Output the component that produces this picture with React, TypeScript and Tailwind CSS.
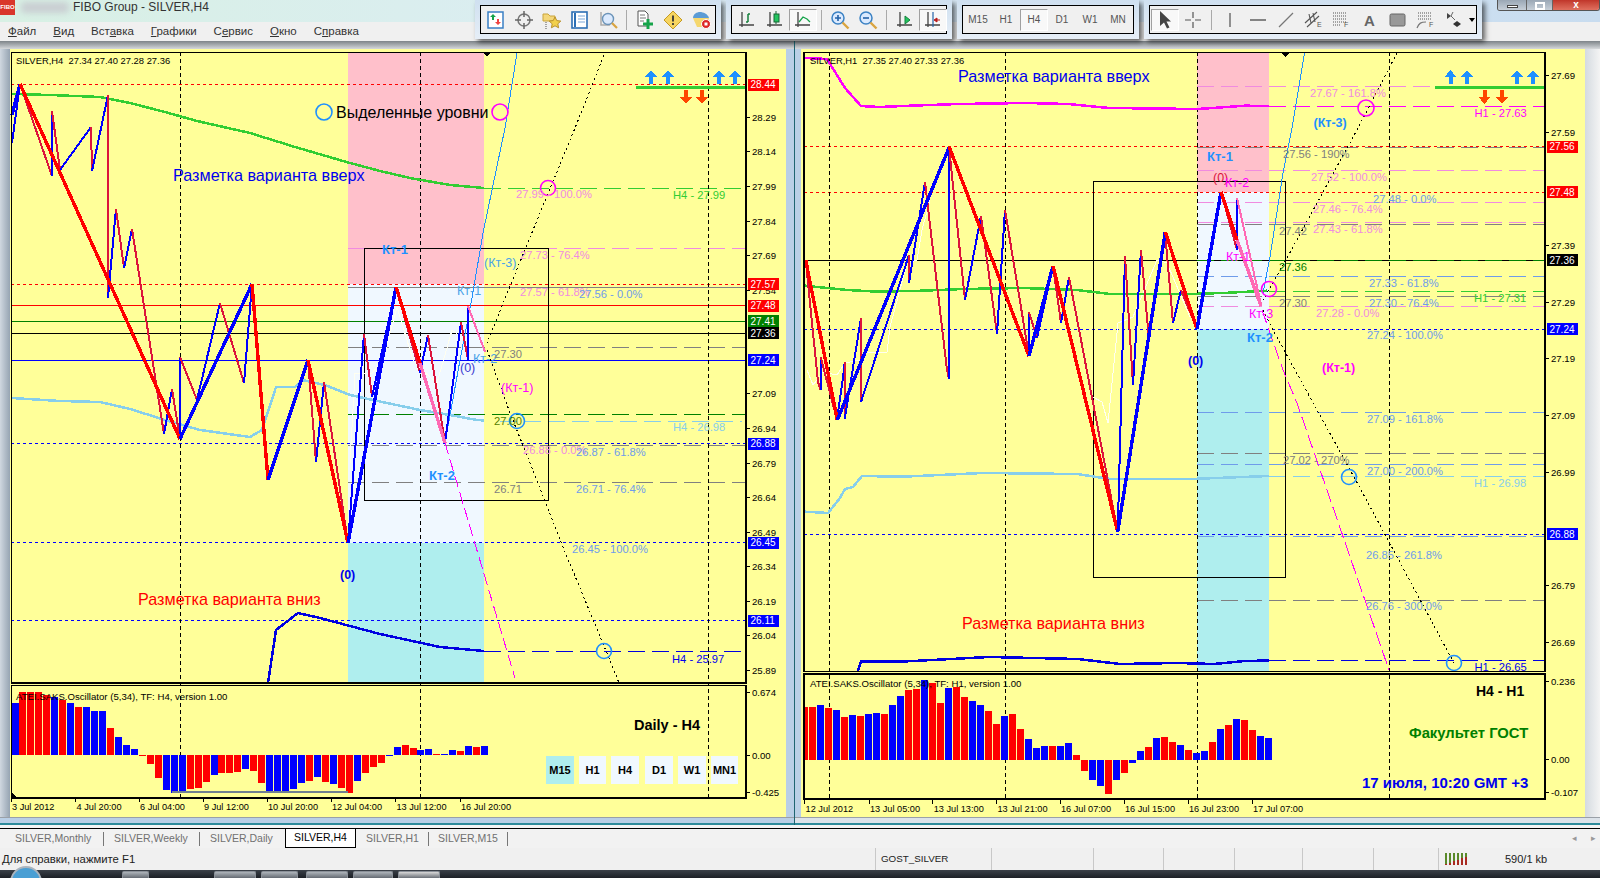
import React from 'react';

type P = [number, number];
type H = [number, number, number, string, string?];
type Lbl = [number, number, string, string, number?, boolean?];
type Bar = [string, number];

const PINK = '#f08be0';
const CORN = '#6f9cea';
const GRAY = '#808080';
const LIME = '#32cd32';
const SKY = '#87ceeb';
const DODGER = '#1e90ff';
const MAGENTA = '#ff00ff';
const CREAM = '#fffff0';
const DOT = '3 3';
const LONG = '17 7';

const pts = (p: P[]) => p.map((q) => q.join(',')).join(' ');

// up legs blue, down legs red, like the zigzag indicator
function Zig({ p, w, up, down }: { p: P[]; w: number; up: string; down: string }) {
  return (
    <g>
      {p.slice(1).map((q, i) => (
        <line
          key={i}
          x1={p[i][0]}
          y1={p[i][1]}
          x2={q[0]}
          y2={q[1]}
          stroke={q[1] < p[i][1] ? up : down}
          strokeWidth={w}
        />
      ))}
    </g>
  );
}

function Curve({ p, c, w = 2.5, dash }: { p: P[]; c: string; w?: number; dash?: string }) {
  return <polyline points={pts(p)} fill="none" stroke={c} strokeWidth={w} strokeDasharray={dash} />;
}

function HLines({ items }: { items: H[] }) {
  return (
    <g>
      {items.map(([y, x1, x2, c, d], i) => (
        <line key={i} x1={x1} x2={x2} y1={y} y2={y} stroke={c} strokeWidth={1} strokeDasharray={d} />
      ))}
    </g>
  );
}

function VDash({ xs, y1, y2 }: { xs: number[]; y1: number; y2: number }) {
  return (
    <g>
      {xs.map((x) => (
        <line key={x} x1={x} x2={x} y1={y1} y2={y2} stroke="#000" strokeWidth={1} strokeDasharray="4 3" />
      ))}
    </g>
  );
}

function Labels({ items }: { items: Lbl[] }) {
  return (
    <g>
      {items.map(([x, y, t, c, s = 11.2, b], i) => (
        <text
          key={i}
          x={x}
          y={y}
          fill={c}
          fontSize={s}
          fontWeight={b ? 700 : 400}
          dominantBaseline="central"
          className="whitespace-pre"
        >
          {t}
        </text>
      ))}
    </g>
  );
}

function Up({ x, y }: { x: number; y: number }) {
  return (
    <polygon
      points={`${x},${y} ${x + 6},${y + 7} ${x + 2},${y + 7} ${x + 2},${y + 14} ${x - 2},${y + 14} ${x - 2},${y + 7} ${x - 6},${y + 7}`}
      fill={DODGER}
    />
  );
}

function Down({ x, y }: { x: number; y: number }) {
  return (
    <polygon
      points={`${x},${y + 14} ${x + 6},${y + 7} ${x + 2},${y + 7} ${x + 2},${y} ${x - 2},${y} ${x - 2},${y + 7} ${x - 6},${y + 7}`}
      fill="#ff4500"
    />
  );
}

function Ring({ x, y, c, r = 7.5 }: { x: number; y: number; c: string; r?: number }) {
  return <circle cx={x} cy={y} r={r} fill="none" stroke={c} strokeWidth={1.6} shapeRendering="geometricPrecision" />;
}

function PriceTags({ x, items }: { x: number; items: [number, string, string][] }) {
  return (
    <g>
      {items.map(([y, t, c]) => (
        <g key={t}>
          <rect x={x} y={y - 6} width={31} height={12} fill={c} />
          <text x={x + 2.5} y={y} fill="#fff" fontSize={10} dominantBaseline="central">
            {t}
          </text>
        </g>
      ))}
    </g>
  );
}

function Axis({ x, items }: { x: number; items: [number, string][] }) {
  return (
    <g>
      {items.map(([y, t]) => (
        <g key={t}>
          <line x1={x} x2={x + 4} y1={y} y2={y} stroke="#000" />
          <text x={x + 6} y={y} fill="#000" fontSize={9.6} dominantBaseline="central">
            {t}
          </text>
        </g>
      ))}
    </g>
  );
}

function Dates({ y, items }: { y: number; items: [number, string][] }) {
  return (
    <g>
      {items.map(([x, t]) => (
        <g key={t}>
          <line x1={x} x2={x} y1={y - 10} y2={y - 5} stroke="#000" />
          <text x={x + 1} y={y} fill="#000" fontSize={9.2} dominantBaseline="central">
            {t}
          </text>
        </g>
      ))}
    </g>
  );
}

// ---- left chart data (H4)
const leftAxis: [number, string][] = [
  '28.29', '28.14', '27.99', '27.84', '27.69', '27.54', '', '', '27.09', '26.94', '26.79', '26.64', '26.49', '26.34', '26.19', '26.04', '25.89',
]
  .map((t, i) => [117.4 + i * 34.57, t] as [number, string])
  .filter(([, t]) => t !== '');

const leftH: H[] = [
  [248.5, 348, 746, PINK, LONG],
  [287, 348, 746, GRAY],
  [347, 348, 746, GRAY, LONG],
  [188, 484, 746, LIME, LONG],
  [414, 348, 746, '#008000', LONG],
  [421, 500, 742, SKY, LONG],
  [445, 348, 746, GRAY, LONG],
  [482.5, 348, 746, GRAY, LONG],
  [651, 484, 746, '#0000e0', LONG],
  [84.5, 11, 746, '#ff0000', DOT],
  [284, 11, 746, '#ff0000', DOT],
  [305.5, 11, 746, '#ff0000'],
  [321, 11, 746, '#008000'],
  [333, 11, 746, '#000'],
  [360, 11, 746, '#0000ff'],
  [443.5, 11, 746, '#0000ff', DOT],
  [542.5, 11, 746, '#0000ff', DOT],
  [620.5, 11, 746, '#0000ff', DOT],
];

const leftThin: P[] = [
  [12, 143], [20, 84], [52, 176], [52, 111], [60, 170], [91, 127], [92, 171], [108, 95], [108, 298], [116, 209], [124, 268], [132, 229], [164, 434], [172, 389], [180, 439], [180, 357], [197, 400], [220, 303], [244, 383], [252, 284], [268, 480], [308, 360], [316, 462], [324, 382], [348, 543], [364, 334], [372, 397], [396, 287], [420, 373], [428, 335], [445, 443], [461, 322], [468, 360], [468, 306],
];
const leftThick: P[] = [
  [12, 115], [20, 84], [180, 439], [252, 284], [268, 480], [308, 360], [348, 543], [396, 287], [420, 363],
];
const leftCream: P[] = [[350, 463], [355, 373], [372, 373], [383, 360], [397, 307], [413, 360], [422, 370], [437, 383], [452, 330], [468, 343]];

const leftLabels: Lbl[] = [
  [16, 60, 'SILVER,H4  27.34 27.40 27.28 27.36', '#000', 9.4],
  [336, 112, 'Выделенные уровни', '#000', 16],
  [173, 175, 'Разметка варианта вверх', '#0000ee', 16.2],
  [138, 599, 'Разметка варианта вниз', '#ff0000', 16.2],
  [382, 249, 'Кт-1', DODGER, 13, true],
  [484, 263, '(Кт-3)', '#4aa3e8', 12.5],
  [520, 255, '27.73 - 76.4%', PINK],
  [520, 292, '27.57 - 61.8%', PINK],
  [579, 294, '27.56 - 0.0%', CORN],
  [457, 291, 'Кт-1', '#4aa3e8', 12.5],
  [473, 359, 'Кт-2', '#4aa3e8', 12.5],
  [494, 354, '27.30', GRAY],
  [460, 368, '(0)', '#3a3ad0', 12.5],
  [501, 388, '(Кт-1)', MAGENTA, 12.5],
  [494, 421, '27.00', '#558000'],
  [673, 427, 'H4 - 26.98', SKY],
  [523, 450, '26.88 - 0.0%', PINK],
  [576, 452, '26.87 - 61.8%', CORN],
  [429, 475, 'Кт-2', DODGER, 13, true],
  [494, 489, '26.71', GRAY],
  [576, 489, '26.71 - 76.4%', CORN],
  [572, 549, '26.45 - 100.0%', CORN],
  [340, 575, '(0)', '#0000ee', 12.5, true],
  [673, 195, 'H4 - 27.99', LIME],
  [672, 659, 'H4 - 25.97', '#0000ee'],
  [516, 194, '27.99 - 100.0%', PINK],
  [16, 696, 'ATEI.SAKS.Oscillator (5,34), TF: H4, version 1.00', '#000', 9.6],
  [634, 725, 'Daily - H4', '#000', 14.5, true],
];

const R = '#ff0000';
const B = '#0000ff';
const leftBars: Bar[] = [
  [B, 128], [R, 96], [R, 96], [R, 96], [R, 106], [B, 110], [R, 120], [B, 128], [R, 141], [B, 141], [B, 153], [B, 153], [R, 203], [B, 231], [B, 255], [B, 267], [R, 288], [R, 312], [R, 354], [B, 390], [B, 398], [B, 395], [R, 388], [R, 384], [R, 366], [B, 345], [R, 340], [R, 340], [R, 335], [B, 328], [R, 333], [R, 370], [B, 395], [B, 395], [B, 395], [B, 387], [B, 370], [R, 362], [B, 350], [R, 367], [B, 372], [R, 385], [R, 398], [B, 362], [R, 338], [R, 322], [R, 308], [B, 287], [B, 260], [R, 255], [R, 265], [B, 270], [B, 267], [R, 283], [B, 283], [B, 270], [R, 273], [B, 258], [R, 261], [B, 258],
];

const tfButtons: [number, number, string, string][] = [
  [546, 28, 'M15', '#afeeee'],
  [579, 27, 'H1', '#f0f8ff'],
  [611, 28, 'H4', '#f0f8ff'],
  [645, 28, 'D1', '#f0f8ff'],
  [678, 28, 'W1', '#f0f8ff'],
  [711, 27, 'MN1', '#f0f8ff'],
];

function LeftChart() {
  return (
    <svg viewBox="10 49 776 768" width={776} height={768} className="block" shapeRendering="crispEdges">
      <rect x={348} y={52} width={136} height={232} fill="#ffc0cb" />
      <rect x={348} y={284} width={136} height={259} fill="#f0f8ff" />
      <rect x={348} y={543} width={136} height={140} fill="#afeeee" />
      <HLines items={leftH} />
      <VDash xs={[180.5, 420.5, 708]} y1={52} y2={798} />
      <rect x={364.5} y={248.5} width={184} height={251.5} fill="none" stroke="#000" />
      <Curve c={CREAM} w={1} p={leftCream} />
      <polyline points="517,53 505,128 483,233 472,298 460,360 445,443" fill="none" stroke={DODGER} strokeWidth={1} />
      <polyline points="604,55 575,128 533,230 487,343" fill="none" stroke="#000" strokeDasharray="2 3" />
      <polyline points="487,350 510,413 530,463 563,547 611,663 619,683" fill="none" stroke="#000" strokeDasharray="2 3" />
      <polyline points="445,443 515,678" fill="none" stroke={MAGENTA} strokeDasharray="12 5" />
      <Curve c={LIME} p={[[12, 94], [50, 95], [100, 97], [130, 103], [165, 112], [197, 121], [250, 133], [295, 147], [350, 163], [380, 171], [410, 178], [450, 185], [484, 188]]} />
      <Curve c={SKY} p={[[12, 398], [60, 401], [100, 402], [130, 409], [165, 420], [200, 430], [250, 437], [262, 430], [276, 387], [295, 387], [302, 380], [325, 385], [350, 395], [373, 400], [420, 410], [450, 415], [477, 420], [484, 420.5]]} />
      <Curve c="#0000e0" p={[[268, 683], [276, 630], [298, 613], [320, 618], [380, 634], [440, 647], [484, 651]]} />
      <Zig p={leftThin} w={2} up={B} down="#dc143c" />
      <Zig p={leftThick} w={3.4} up={B} down={R} />
      <Curve c="#ff69b4" w={3.4} p={[[420, 363], [445, 443]]} />
      <Curve c="#ff69b4" w={2} p={[[468, 306], [485, 352]]} />
      <Ring x={324} y={112} c={DODGER} r={8} />
      <Ring x={500} y={112} c={MAGENTA} r={8} />
      <Ring x={548} y={188} c={MAGENTA} />
      <Ring x={517} y={421} c={DODGER} />
      <Ring x={604} y={651} c={DODGER} />
      <rect x={636} y={86} width={110} height={3} fill={LIME} />
      <Up x={651} y={70} />
      <Up x={668} y={70} />
      <Up x={719} y={70} />
      <Up x={735} y={70} />
      <Down x={686} y={90} />
      <Down x={702} y={90} />
      <polygon points="483,52 491,52 487,57" fill="#000" />
      {leftBars.map(([c, v], i) => {
        const x = 11.5 + i * 7.96;
        const h = Math.abs(v - 285) / 3;
        return <rect key={i} x={x} y={v < 285 ? 755 - h : 755} width={7} height={h} fill={c} />;
      })}
      <rect x={172} y={791} width={176} height={2} fill="#708090" />
      <polygon points="11,798 11,792 17,798" fill="#000" />
      <rect x={11.5} y={52.5} width={734.5} height={630.5} fill="none" stroke="#000" strokeWidth={1.4} />
      <rect x={11.5} y={685.5} width={734.5} height={112.5} fill="none" stroke="#000" strokeWidth={1.4} />
      <Axis x={746} items={leftAxis} />
      <Axis x={746} items={[[692, '0.674'], [755, '0.00'], [792, '-0.425']]} />
      <PriceTags
        x={748}
        items={[
          [84.5, '28.44', R],
          [284, '27.57', R],
          [305.5, '27.48', R],
          [321, '27.41', '#008000'],
          [333, '27.36', '#000'],
          [360, '27.24', B],
          [443.5, '26.88', B],
          [542.5, '26.45', B],
          [620.5, '26.11', B],
        ]}
      />
      <rect x={745} y={565} width={2} height={30} fill="#000" />
      <Dates y={807} items={[[11, '3 Jul 2012'], [75.6, '4 Jul 20:00'], [139, '6 Jul 04:00'], [203, '9 Jul 12:00'], [267, '10 Jul 20:00'], [331, '12 Jul 04:00'], [395.5, '13 Jul 12:00'], [460, '16 Jul 20:00']]} />
      {tfButtons.map(([x, w, t, c]) => (
        <g key={t}>
          <rect x={x} y={756} width={w} height={28} fill={c} />
          <text x={x + w / 2} y={770} fill="#000" fontSize={11} fontWeight={700} textAnchor="middle" dominantBaseline="central">
            {t}
          </text>
        </g>
      ))}
      <Labels items={leftLabels} />
    </svg>
  );
}

// ---- right chart data (H1)
const rightAxis: [number, string][] = [
  '27.69', '27.59', '', '27.39', '27.29', '27.19', '27.09', '26.99', '', '26.79', '26.69',
]
  .map((t, i) => [75.6 + i * 56.64, t] as [number, string])
  .filter(([, t]) => t !== '');

const rightH: H[] = [
  [86.5, 1197, 1545, PINK, LONG],
  [106.5, 1269, 1545, MAGENTA, LONG],
  [147, 1197, 1545, GRAY, LONG],
  [170.5, 1197, 1545, PINK, LONG],
  [202, 1197, 1545, PINK, LONG],
  [222.3, 1197, 1545, PINK, LONG],
  [224, 1197, 1545, GRAY, LONG],
  [276, 1197, 1545, CORN, LONG],
  [291.5, 1269, 1545, LIME, LONG],
  [296, 1197, 1545, GRAY, LONG],
  [306.5, 1197, 1545, PINK, LONG],
  [412.5, 1197, 1545, CORN, LONG],
  [453.5, 1197, 1545, GRAY, LONG],
  [464.5, 1197, 1545, CORN, LONG],
  [476.5, 1269, 1545, SKY, LONG],
  [536, 1197, 1545, CORN, LONG],
  [600, 1197, 1545, GRAY, LONG],
  [660.5, 1269, 1545, '#0000e0', LONG],
  [146.5, 804, 1545, '#ff0000', DOT],
  [192.3, 804, 1545, '#ff0000', DOT],
  [260.3, 804, 1545, '#000'],
  [260.3, 1197, 1545, '#008000', LONG],
  [329, 804, 1545, '#0000ff', DOT],
  [534.3, 804, 1545, '#0000ff', DOT],
];

const rightThin: P[] = [
  [805.7, 260], [818, 382], [820.7, 390], [820.7, 357], [837, 420], [844, 370], [844.7, 362], [844.7, 419], [861, 318], [861, 402], [909, 255], [909, 283], [925, 182], [947, 370], [949, 379], [949, 147], [965, 300], [981, 216], [997, 334], [1005, 210], [1029, 356], [1029, 312], [1037, 338], [1053, 266], [1061, 323], [1069, 277], [1117.7, 532], [1125, 256], [1133, 385], [1141, 250], [1149, 340], [1165, 232], [1173, 323], [1181, 290], [1197, 329], [1221, 192], [1237, 250], [1237, 198],
];
const rightThick: P[] = [
  [805.7, 260], [837.3, 420], [949.3, 147], [1029, 356], [1053, 266], [1117.7, 532], [1165.3, 232], [1197, 329], [1221, 192], [1237, 240],
];
const rightCream: P[] = [[807, 370], [813, 385], [823, 372], [837, 375], [845, 363], [860, 360], [865, 352], [887, 352], [890, 327], [907, 263], [917, 260], [922, 230], [930, 200]];
const rightCream2: P[] = [[1093, 397], [1102, 402], [1108, 423], [1118, 323], [1133, 317], [1157, 260], [1167, 263], [1190, 317]];

const rightLabels: Lbl[] = [
  [810, 60, 'SILVER,H1  27.35 27.40 27.33 27.36', '#000', 9.4],
  [958, 76, 'Разметка варианта вверх', '#0000ee', 16.2],
  [962, 623, 'Разметка варианта вниз', '#ff0000', 16.2],
  [1310, 93, '27.67 - 161.8%', PINK],
  [1474.5, 113, 'H1 - 27.63', MAGENTA],
  [1313.5, 123, '(Кт-3)', DODGER, 12.5, true],
  [1207, 156, 'Кт-1', DODGER, 13, true],
  [1283, 154, '27.56 - 190%', GRAY],
  [1213, 178, '(0)', '#dc143c', 12.5],
  [1225, 183, 'Кт-2', MAGENTA, 12.5],
  [1311, 177, '27.52 - 100.0%', PINK],
  [1373, 199, '27.48 - 0.0%', CORN],
  [1313, 209, '27.46 - 76.4%', PINK],
  [1279, 231, '27.42', GRAY],
  [1313, 229, '27.43 - 61.8%', PINK],
  [1226, 257, 'Кт-1', MAGENTA, 12.5],
  [1279, 267, '27.36', '#008000'],
  [1369, 283, '27.33 - 61.8%', CORN],
  [1279, 303, '27.30', GRAY],
  [1369, 303, '27.30 - 76.4%', CORN],
  [1474, 298, 'H1 - 27.31', LIME],
  [1316, 313, '27.28 - 0.0%', PINK],
  [1249, 314, 'Кт-3', MAGENTA, 12.5],
  [1367, 335, '27.24 - 100.0%', CORN],
  [1247, 337, 'Кт-2', DODGER, 13, true],
  [1188, 361, '(0)', '#0000ee', 12.5, true],
  [1322, 368, '(Кт-1)', MAGENTA, 12.5, true],
  [1367, 419, '27.09 - 161.8%', CORN],
  [1283, 460, '27.02 - 270%', GRAY],
  [1367, 471, '27.00 - 200.0%', CORN],
  [1474, 483, 'H1 - 26.98', SKY],
  [1366, 554.5, '26.85 - 261.8%', CORN],
  [1366, 606, '26.76 - 300.0%', CORN],
  [1474.5, 667, 'H1 - 26.65', '#0000ee'],
  [810, 683, 'ATEI.SAKS.Oscillator (5,34), TF: H1, version 1.00', '#000', 9.6],
  [1476, 691, 'H4 - H1', '#000', 14, true],
  [1409, 733, 'Факультет ГОСТ', '#008000', 14.8, true],
  [1362, 782, '17 июля, 10:20 GMT +3', '#0000ee', 15, true],
];

const rightBars: Bar[] = [
  [R, 171], [R, 171], [B, 165], [R, 173], [B, 180], [R, 200], [B, 195], [R, 198], [B, 192], [B, 189], [R, 191], [B, 165], [B, 138], [R, 120], [R, 117], [B, 90], [R, 100], [R, 158], [B, 114], [R, 111], [R, 141], [B, 153], [B, 165], [R, 183], [R, 222], [B, 198], [R, 191], [R, 237], [B, 267], [B, 294], [B, 288], [R, 288], [B, 288], [B, 279], [R, 315], [R, 362], [B, 390], [B, 408], [R, 432], [B, 390], [R, 369], [B, 339], [B, 303], [R, 291], [B, 264], [R, 261], [R, 276], [B, 285], [R, 300], [B, 309], [B, 303], [R, 276], [B, 237], [R, 225], [B, 207], [R, 210], [R, 240], [B, 258], [B, 264],
];

function RightChart() {
  return (
    <svg viewBox="801 49 784 768" width={784} height={768} className="block" shapeRendering="crispEdges">
      <rect x={1197} y={52} width={72} height={140} fill="#ffc0cb" />
      <rect x={1197} y={192} width={72} height={137} fill="#f0f8ff" />
      <rect x={1197} y={329} width={72} height={343} fill="#afeeee" />
      <HLines items={rightH} />
      <VDash xs={[829.5, 1005.5, 1197, 1389.5]} y1={52} y2={799} />
      <rect x={1093.5} y={181.7} width={192} height={395.3} fill="none" stroke="#000" />
      <Curve c={CREAM} w={1} p={rightCream} />
      <Curve c={CREAM} w={1} p={rightCream2} />
      <polyline points="1304.6,53 1292,128 1283,173 1270,257 1263,293" fill="none" stroke={DODGER} />
      <polyline points="1397,53 1358,128 1287,258 1263,300" fill="none" stroke="#000" strokeDasharray="2 3" />
      <polyline points="1263,310 1273,330 1360,488 1454,663" fill="none" stroke="#000" strokeDasharray="2 3" />
      <polyline points="1262,310 1283,370 1297,403 1327,490 1389,670" fill="none" stroke={MAGENTA} strokeDasharray="14 5" />
      <Curve c={MAGENTA} p={[[804.6, 58], [827, 59], [845, 88], [861, 106], [879, 107], [911, 105.7], [958, 104], [1026, 103], [1068, 104], [1109, 108], [1198, 109], [1245, 105.7], [1269, 106]]} />
      <Curve c={LIME} p={[[805, 285.7], [847, 290], [878, 291.7], [923, 290.7], [963, 289], [1023, 288], [1077, 290], [1110, 294], [1190, 294], [1223, 293], [1267, 290.7]]} />
      <Curve c={SKY} p={[[805, 511.7], [828, 513], [840, 498], [845, 489], [853, 487], [862, 476], [903, 476.7], [983, 473], [1077, 474], [1110, 479], [1190, 479], [1269, 476]]} />
      <Curve c="#0000e0" p={[[857.4, 672], [861, 661.7], [900, 661.7], [989, 657], [1078, 659], [1120, 664], [1177, 663], [1214, 664], [1245, 661], [1269, 660.5]]} />
      <Zig p={rightThin} w={2} up={B} down="#dc143c" />
      <Zig p={rightThick} w={3.4} up={B} down={R} />
      <Curve c="#ff69b4" w={3.4} p={[[1237, 240], [1261, 306]]} />
      <Curve c="#ff69b4" w={2} p={[[1237, 198], [1260, 300]]} />
      <Ring x={1366} y={108} c={MAGENTA} r={8} />
      <Ring x={1269} y={289} c={MAGENTA} />
      <Ring x={1349} y={477} c={DODGER} />
      <Ring x={1454} y={663} c={DODGER} />
      <rect x={1435} y={86} width={109} height={3} fill={LIME} />
      <Up x={1450.5} y={70} />
      <Up x={1467} y={70} />
      <Up x={1517} y={70} />
      <Up x={1533} y={70} />
      <Down x={1484.5} y={90} />
      <Down x={1502} y={90} />
      <polygon points="1280,52 1290,52 1285,57" fill="#000" />
      {rightBars.map(([c, v], i) => {
        const x = Math.max(804, 801.4 + i * 8);
        const w = 801.4 + i * 8 + 7 - x;
        const h = Math.abs(v - 329) / 3;
        return <rect key={i} x={x} y={v < 329 ? 759.7 - h : 759.7} width={w} height={h} fill={c} />;
      })}
      <rect x={804} y={52.5} width={741} height={619} fill="none" stroke="#000" strokeWidth={1.2} />
      <rect x={804} y={674} width={741} height={125} fill="none" stroke="#000" strokeWidth={1.2} />
      <Axis x={1545} items={rightAxis} />
      <Axis x={1545} items={[[681, '0.236'], [759.7, '0.00'], [792.7, '-0.107']]} />
      <PriceTags
        x={1547}
        items={[
          [146.5, '27.56', R],
          [192.3, '27.48', R],
          [260.3, '27.36', '#000'],
          [329, '27.24', B],
          [534.3, '26.88', B],
        ]}
      />
      <rect x={1544} y={590} width={2} height={25} fill="#000" />
      <Dates y={808.7} items={[[804.6, '12 Jul 2012'], [869, '13 Jul 05:00'], [932.7, '13 Jul 13:00'], [996.5, '13 Jul 21:00'], [1060, '16 Jul 07:00'], [1124, '16 Jul 15:00'], [1188, '16 Jul 23:00'], [1252, '17 Jul 07:00']]} />
      <Labels items={rightLabels} />
    </svg>
  );
}

// ---- toolbar icons, 20x20
const Ico = ({ children }: { children: React.ReactNode }) => (
  <svg width={20} height={20} viewBox="0 0 20 20" fill="none">
    {children}
  </svg>
);

const axes = <path d="M5 2v15M2 15h15" stroke="#444" strokeWidth={1.3} />;

const icons: Record<string, React.ReactNode> = {
  market: (
    <Ico>
      <rect x={2} y={2} width={15} height={16} fill="#fff" stroke="#3a7fc4" strokeWidth={1.5} />
      <path d="M7 4l3 3H8v3H6V7H4z" fill="#16a34a" />
      <path d="M12 15l-3-3h2V9h2v3h2z" fill="#ef4444" />
    </Ico>
  ),
  target: (
    <Ico>
      <circle cx={10} cy={10} r={6} stroke="#777" strokeWidth={1.5} />
      <path d="M10 1v6M10 13v6M1 10h6M13 10h6" stroke="#666" strokeWidth={1.5} />
    </Ico>
  ),
  folderStar: (
    <Ico>
      <path d="M1 4h5l2 2h5v5H1z" fill="#f4d77a" stroke="#c9a53c" />
      <path d="M13 7l1.800 3.600 4 .5-3 2.700.8 4-3.600-2-3.600 2 .8-4-3-2.700 4-.5z" fill="#f2d04a" stroke="#b8902c" />
      <path d="M4 12v7" stroke="#555" strokeDasharray="1 1" />
    </Ico>
  ),
  book: (
    <Ico>
      <rect x={2} y={2} width={15} height={16} fill="#fff" stroke="#2c6fb5" strokeWidth={1.6} />
      <path d="M5 3v14" stroke="#2c6fb5" strokeWidth={2} />
      <path d="M8 6h7M8 9h7M8 12h7" stroke="#7aa7d8" />
    </Ico>
  ),
  tester: (
    <Ico>
      <path d="M3 2v13h9" stroke="#aaa" strokeWidth={1.5} />
      <circle cx={10} cy={9} r={5.5} fill="#dbeafe" stroke="#6b93b8" strokeWidth={1.4} />
      <path d="M14 13l5 5" stroke="#d9a441" strokeWidth={2.2} />
    </Ico>
  ),
  newDoc: (
    <Ico>
      <path d="M3 1h7l3 3v12H3z" fill="#fff" stroke="#555" />
      <path d="M5 5h5M5 8h6M5 11h4" stroke="#777" />
      <path d="M13 9v10M8 14h10" stroke="#16a34a" strokeWidth={3} />
    </Ico>
  ),
  alert: (
    <Ico>
      <path d="M10 1l9 9-9 9-9-9z" fill="#f7d560" stroke="#c59a20" />
      <path d="M10 5.500v6M10 13v2" stroke="#333" strokeWidth={1.8} />
    </Ico>
  ),
  expert: (
    <Ico>
      <path d="M2 8c0-4 4-6 7-6s8 2 9 6z" fill="#5b9bd5" />
      <path d="M2 8h16l-2 9H6z" fill="#f5d76e" />
      <circle cx={15} cy={14} r={4.5} fill="#dc2626" stroke="#fff" />
      <rect x={13.5} y={12.5} width={3} height={3} fill="#fff" />
    </Ico>
  ),
  bars: (
    <Ico>
      {axes}
      <path d="M11 4v8M11 4h2M9 12h2" stroke="#16803c" strokeWidth={1.5} />
    </Ico>
  ),
  candle: (
    <Ico>
      {axes}
      <path d="M11 1v13" stroke="#166534" />
      <rect x={9} y={4} width={5} height={8} fill="#22c55e" stroke="#166534" />
    </Ico>
  ),
  line: (
    <Ico>
      {axes}
      <path d="M6 12l4-5 4 2 3 3" stroke="#16a34a" strokeWidth={1.3} />
    </Ico>
  ),
  zoomIn: (
    <Ico>
      <circle cx={8} cy={8} r={6} fill="#dbeafe" stroke="#3b82c4" strokeWidth={1.5} />
      <path d="M5 8h6M8 5v6" stroke="#2563a8" strokeWidth={1.6} />
      <path d="M12.500 12.500l6 6" stroke="#d9a441" strokeWidth={2.4} />
    </Ico>
  ),
  zoomOut: (
    <Ico>
      <circle cx={8} cy={8} r={6} fill="#dbeafe" stroke="#3b82c4" strokeWidth={1.5} />
      <path d="M5 8h6" stroke="#2563a8" strokeWidth={1.6} />
      <path d="M12.500 12.500l6 6" stroke="#d9a441" strokeWidth={2.4} />
    </Ico>
  ),
  scroll: (
    <Ico>
      {axes}
      <path d="M10 6l5 4-5 4z" fill="#22c55e" stroke="#15803d" />
    </Ico>
  ),
  shift: (
    <Ico>
      {axes}
      <path d="M10 2v15" stroke="#2563a8" strokeWidth={1.2} />
      <path d="M17 10h-3M14 8l-3 2 3 2z" fill="#b91c1c" stroke="#b91c1c" />
    </Ico>
  ),
  cursor: (
    <Ico>
      <path d="M5 1v15l4-3.500 3 6 2.500-1-3-6H16z" fill="#444" />
    </Ico>
  ),
  cross: (
    <Ico>
      <path d="M10 2v6M10 12v6M2 10h6M12 10h6" stroke="#555" strokeWidth={1.2} />
    </Ico>
  ),
  vline: (
    <Ico>
      <path d="M10 3v14" stroke="#666" strokeWidth={1.4} />
    </Ico>
  ),
  hline: (
    <Ico>
      <path d="M2 10h16" stroke="#555" strokeWidth={1.4} />
    </Ico>
  ),
  trend: (
    <Ico>
      <path d="M3 17L17 3" stroke="#777" strokeWidth={1.3} />
    </Ico>
  ),
  channel: (
    <Ico>
      <path d="M1 13L13 2M3 17L15 6M5 4l2 9M9 3l2 9" stroke="#555" strokeWidth={1.1} />
      <text x={13} y={17} fontSize={7} fill="#555">E</text>
    </Ico>
  ),
  fibo: (
    <Ico>
      <path d="M1 3h13M1 6h13M1 9h13M1 12h13M1 15h7" stroke="#555" strokeDasharray="1 1" />
      <text x={12} y={17} fontSize={7} fill="#555">F</text>
    </Ico>
  ),
  text: (
    <Ico>
      <text x={4} y={16} fontSize={15} fontWeight={700} fill="#666">A</text>
    </Ico>
  ),
  rect: (
    <Ico>
      <rect x={2} y={4} width={15} height={12} rx={1.5} fill="#999" stroke="#666" />
    </Ico>
  ),
  fan: (
    <Ico>
      <path d="M2 3h14M2 6h14M2 9h14" stroke="#555" strokeDasharray="1 1" />
      <path d="M1 18c2-5 4-6 9-6" stroke="#777" strokeWidth={1.2} />
      <text x={13} y={17} fontSize={7} fill="#555">F</text>
    </Ico>
  ),
  shapes: (
    <Ico>
      <path d="M3 3l4 3-4 3z" fill="#444" />
      <path d="M7 6l4 4M9 2l-2 4" stroke="#666" />
      <path d="M13 11l4 3-4 3-4-3z" fill="#333" />
    </Ico>
  ),
};

function ToolBtn({ name, active }: { name: string; active?: boolean }) {
  return (
    <div
      className={`flex h-[22px] w-[28px] shrink-0 items-center justify-center ${
        active ? 'border border-t-[#a0a0a0] border-l-[#a0a0a0] border-r-[#fff] border-b-[#fff] bg-[#f8f8f8]' : ''
      }`}
    >
      {icons[name]}
    </div>
  );
}

const Sep = () => <div className="mx-[4px] h-5 w-px shrink-0 bg-[#a9a9a9]" />;

function Toolbar({ width, children }: { width: string; children: React.ReactNode }) {
  return (
    <div
      className={`h-[39px] bg-gradient-to-b from-[#cfe0f0] to-[#e6eef7] px-[5px] pt-[5px] pb-[5px] shadow-[3px_3px_5px_rgba(0,0,0,0.6)] ${width}`}
    >
      <div className="flex h-[29px] items-center border border-black bg-[#f0f0f0] pl-px">{children}</div>
    </div>
  );
}

const Tf = ({ t, active }: { t: string; active?: boolean }) => (
  <div
    className={`flex h-[22px] w-[28px] shrink-0 items-center justify-center text-[10px] text-[#555] ${
      active ? 'border border-t-[#a0a0a0] border-l-[#a0a0a0] border-r-[#fff] border-b-[#fff] bg-[#f8f8f8]' : ''
    }`}
  >
    {t}
  </div>
);

function Toolbars() {
  return (
    <div className="absolute top-0 left-[475px] flex gap-[5px]">
      <Toolbar width="w-[246px]">
        <ToolBtn name="market" />
        <ToolBtn name="target" />
        <ToolBtn name="folderStar" />
        <ToolBtn name="book" />
        <ToolBtn name="tester" />
        <Sep />
        <ToolBtn name="newDoc" />
        <ToolBtn name="alert" />
        <ToolBtn name="expert" />
      </Toolbar>
      <Toolbar width="w-[226px]">
        <ToolBtn name="bars" />
        <ToolBtn name="candle" />
        <ToolBtn name="line" active />
        <Sep />
        <ToolBtn name="zoomIn" />
        <ToolBtn name="zoomOut" />
        <Sep />
        <ToolBtn name="scroll" />
        <ToolBtn name="shift" active />
      </Toolbar>
      <Toolbar width="w-[182px]">
        <Tf t="M15" />
        <Tf t="H1" />
        <Tf t="H4" active />
        <Tf t="D1" />
        <Tf t="W1" />
        <Tf t="MN" />
      </Toolbar>
      <Toolbar width="w-[338px]">
        <ToolBtn name="cursor" active />
        <ToolBtn name="cross" />
        <Sep />
        <ToolBtn name="vline" />
        <ToolBtn name="hline" />
        <ToolBtn name="trend" />
        <ToolBtn name="channel" />
        <ToolBtn name="fibo" />
        <ToolBtn name="text" />
        <ToolBtn name="rect" />
        <ToolBtn name="fan" />
        <ToolBtn name="shapes" />
        <div className="ml-px h-0 w-0 border-x-[3px] border-t-[4px] border-x-transparent border-t-black" />
      </Toolbar>
    </div>
  );
}

function TitleBar() {
  return (
    <div className="flex h-[22px] shrink-0 items-start bg-gradient-to-r from-[#d8f0e4] via-[#dcecf8] to-[#c8dcef]">
      <div className="flex h-[15px] w-[15px] items-center justify-center bg-[#d9362b] text-[6px] font-bold text-white">FIBO</div>
      <div className="mt-[2px] ml-[6px] h-[11px] w-[48px] rounded bg-[#c9ced2] blur-[3px]" />
      <div className="ml-[4px] text-[12px] leading-[15px] text-[#333]">FIBO Group - SILVER,H4</div>
      <div className="ml-auto flex h-[11px] overflow-hidden rounded-b-[3px] border border-t-0 border-[#555]">
        <div className="flex w-[29px] items-end justify-center border-r border-[#666] bg-gradient-to-b from-[#9aa7b5] to-[#c6cfd8] pb-[2px]">
          <div className="h-[3px] w-[11px] border border-[#444] bg-white" />
        </div>
        <div className="flex w-[26px] items-end justify-center border-r border-[#666] bg-gradient-to-b from-[#9aa7b5] to-[#c6cfd8]">
          <div className="h-[8px] w-[10px] border-2 border-white" />
        </div>
        <div className="flex w-[46px] items-center justify-center bg-gradient-to-b from-[#c0352a] to-[#e0705f] text-[10px] leading-[10px] font-bold text-white">x</div>
      </div>
    </div>
  );
}

function MenuBar() {
  return (
    <div className="flex h-[19px] shrink-0 items-center gap-[17px] bg-[#f0f0f0] pl-[8px] text-[11.5px] text-[#333]">
      <span><u>Ф</u>айл</span>
      <span><u>В</u>ид</span>
      <span>Вст<u>а</u>вка</span>
      <span><u>Г</u>рафики</span>
      <span>С<u>е</u>рвис</span>
      <span><u>О</u>кно</span>
      <span>С<u>п</u>равка</span>
    </div>
  );
}

function Tabs() {
  const tab = 'flex h-[19px] shrink-0 items-center text-[10.5px] text-[#707070]';
  return (
    <div className="h-[23px] shrink-0 bg-[#f4f4f4] pt-[3px]">
      <div className="flex h-[20px] items-start border-t border-black bg-[#f2f2f2]">
        <div className={`${tab} w-[104px] pl-[15px]`}>SILVER,Monthly<span className="ml-auto h-[14px] w-px bg-[#777]" /></div>
        <div className={`${tab} w-[96px] pl-[10px]`}>SILVER,Weekly<span className="ml-auto h-[14px] w-px bg-[#777]" /></div>
        <div className={`${tab} w-[85px] pl-[10px]`}>SILVER,Daily</div>
        <div className={`${tab} w-[71px] border-x border-b border-black bg-white pl-[8px] text-black`}>SILVER,H4</div>
        <div className={`${tab} w-[73px] pl-[10px]`}>SILVER,H1<span className="ml-auto h-[14px] w-px bg-[#777]" /></div>
        <div className={`${tab} w-[79px] pl-[9px]`}>SILVER,M15<span className="ml-auto h-[14px] w-px bg-[#777]" /></div>
        <div className="ml-auto mt-[3px] mr-[4px] flex w-[24px] justify-between text-[9px] text-[#999]">
          <span>◂</span>
          <span>▸</span>
        </div>
      </div>
    </div>
  );
}

function StatusBar() {
  const cell = 'h-full shrink-0 border-l border-[#c8c8c8]';
  return (
    <div className="flex h-[22px] shrink-0 items-center bg-[#f0f0f0] text-[11.3px] text-[#222]">
      <div className="w-[875px] shrink-0 pl-[2px]">Для справки, нажмите F1</div>
      <div className={`${cell} flex w-[116px] items-center pl-[5px] text-[9.8px]`}>GOST_SILVER</div>
      <div className={`${cell} w-[102px]`} />
      <div className={`${cell} w-[70px]`} />
      <div className={`${cell} w-[71px]`} />
      <div className={`${cell} w-[68px]`} />
      <div className={`${cell} w-[71px]`} />
      <div className={`${cell} w-[65px]`} />
      <div className={`${cell} flex w-[152px] items-center pl-[6px]`}>
        <svg width={24} height={12} viewBox="0 0 24 12" shapeRendering="crispEdges">
          {[0, 4, 8, 12, 16, 20].map((x, i) => (
            <g key={x}>
              <rect x={x} y={0} width={2} height={11 - i * 1.5} fill="#5a8a2a" />
              <rect x={x} y={11 - i * 1.5} width={2} height={i * 1.5 + 1} fill="#a82a20" />
            </g>
          ))}
        </svg>
        <span className="ml-[36px] text-[11px]">590/1 kb</span>
      </div>
    </div>
  );
}

function TaskBar() {
  const btn = 'mt-px h-[8px] shrink-0 rounded-t-[2px] border border-b-0 border-[#8a9098] bg-gradient-to-b from-[#aeb4ba] to-[#5a6068]';
  return (
    <div className="relative flex h-[8px] shrink-0 bg-gradient-to-b from-[#3a4048] to-[#1c2026]">
      <div className="absolute bottom-[-20px] left-[10px] h-[32px] w-[32px] rounded-full border-2 border-[#aab4be] bg-[#4a9fd4]" />
      <div className={`${btn} ml-[122px] w-[27px]`} />
      <div className={`${btn} ml-[65px] w-[42px]`} />
      <div className={`${btn} ml-[5px] w-[37px]`} />
      <div className={`${btn} ml-[8px] w-[42px]`} />
      <div className={`${btn} ml-[5px] w-[40px]`} />
      <div className={`${btn} ml-[5px] w-[42px] from-[#d8d8d8]`} />
    </div>
  );
}

export default function App() {
  return (
    <div className="relative flex h-[878px] w-[1600px] flex-col overflow-hidden bg-[#f0f0f0] font-['Liberation_Sans',sans-serif] text-black">
      <TitleBar />
      <MenuBar />
      <div className="flex h-[784px] shrink-0">
        <div className="flex w-[794px] flex-col bg-[#b9cfe6]">
          <div className="h-[8px] bg-gradient-to-b from-[#7e8489] to-[#d6d9dc]" />
          <div className="flex">
            <div className="w-[10px] bg-gradient-to-r from-[#d0d8e0] to-[#96a4b2]" />
            <div className="bg-[#ffff99]">
              <LeftChart />
            </div>
          </div>
          <div className="h-[6px] border-t border-[#9aa0a8]" />
          <div className="h-[2px] bg-[#2c8a9a]" />
        </div>
        <div className="w-px bg-[#1f6470]" />
        <div className="flex flex-1 flex-col bg-[#c6d8ea]">
          <div className="h-[8px] bg-gradient-to-b from-[#7e8489] to-[#d6d9dc]" />
          <div className="flex flex-1">
            <div className="w-[6px] bg-[#b9cfe6]" />
            <div className="bg-[#ffff99]">
              <RightChart />
            </div>
            <div className="flex-1 bg-gradient-to-r from-[#d4dae0] to-[#f4f4f4]" />
          </div>
          <div className="h-[6px] border-t border-[#9aa0a8] bg-[#dce3ea]" />
          <div className="h-[2px] bg-[#2c8a9a]" />
        </div>
      </div>
      <Tabs />
      <StatusBar />
      <TaskBar />
      <Toolbars />
    </div>
  );
}
